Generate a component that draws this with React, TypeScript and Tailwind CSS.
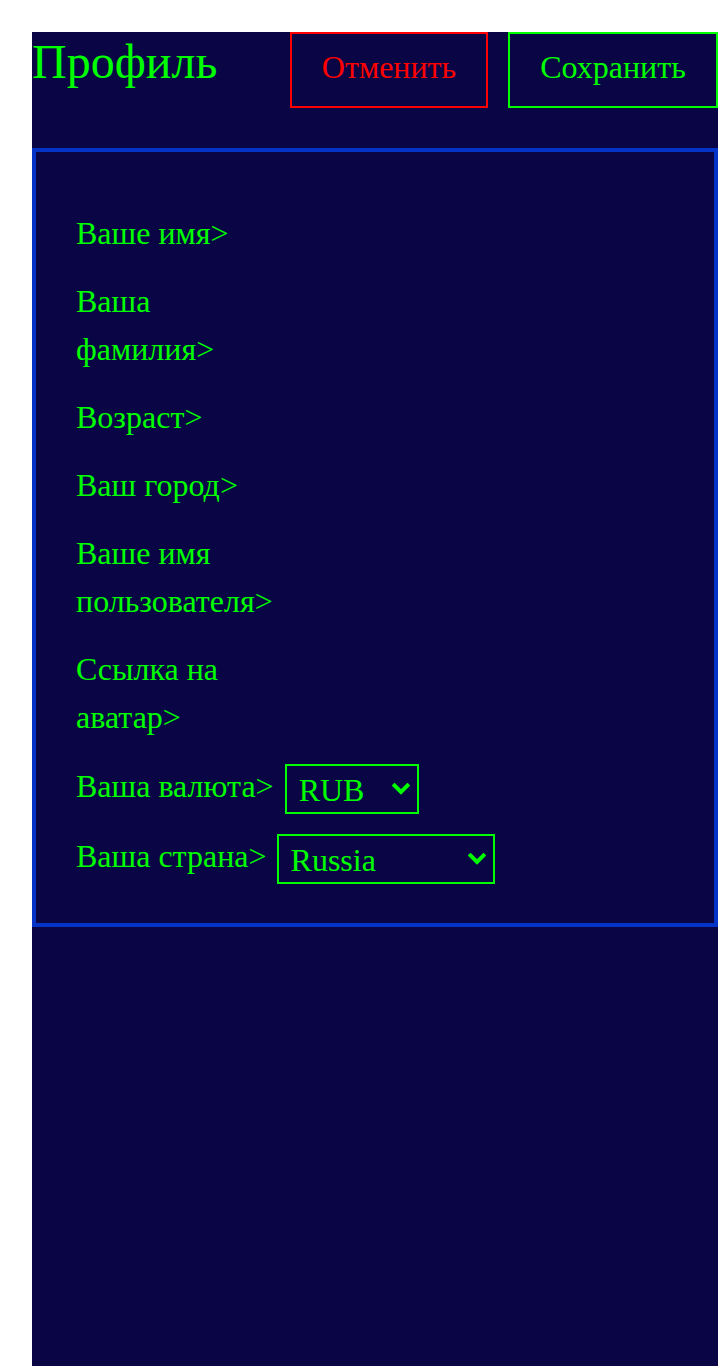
import React from 'react';

const fields = [
    "Ваше имя>",
    "Ваша фамилия>",
    "Возраст>",
    "Ваш город>",
    "Ваше имя пользователя>",
    "Ссылка на аватар>",
];

const Chevron: React.FC = () => (
    <svg
        className="pointer-events-none absolute right-[9px] top-1/2 -translate-y-1/2"
        width="18"
        height="12"
        viewBox="0 0 18 12"
        fill="none"
    >
        <polyline points="2.5,2.5 9,9 15.5,2.5" stroke="#00ff00" strokeWidth="4" strokeLinecap="square" />
    </svg>
);

const Select: React.FC<{ options: string[]; width: string }> = ({ options, width }) => (
    <div className={`relative ${width}`}>
        <select className="h-[50px] w-full appearance-none border-2 border-[#00ff00] bg-transparent pb-[8px] pl-[12px] text-[32px] leading-normal text-[#00ff00] outline-none">
            {options.map((o) => (
                <option key={o} className="bg-[#0a0645]">{o}</option>
            ))}
        </select>
        <Chevron />
    </div>
);

export default function App() {
    return (
        <div className="min-h-screen bg-white pl-8 pt-8" style={{ fontFamily: '"Liberation Serif", "Times New Roman", serif' }}>
            <div className="flex min-h-[1334px] flex-col bg-[#0a0645]">

                {/* Header */}
                <div className="flex items-start justify-between">
                    <h1 className="text-[48px] leading-[60px] text-[#00ff00]">Профиль</h1>
                    <div className="flex gap-5">
                        <button className="flex h-[76px] w-[198px] items-center justify-center border-2 border-[#ff0000] pb-[7px] text-[32px] text-[#ff0000]">
                            Отменить
                        </button>
                        <button className="flex h-[76px] w-[210px] items-center justify-center border-2 border-[#00ff00] pb-[7px] text-[32px] text-[#00ff00]">
                            Сохранить
                        </button>
                    </div>
                </div>

                {/* Form */}
                <div className="mt-10 flex flex-col gap-5 border-4 border-[#0433c8] px-10 pb-[39px] pt-[57px] text-[32px] leading-[48px] text-[#00ff00]">
                    {fields.map((f) => (
                        <div key={f} className="max-w-[210px]">{f}</div>
                    ))}
                    <div className="mt-[3px] flex items-start gap-[11px]">
                        <span className="-mt-[2px]">Ваша валюта&gt;</span>
                        <Select options={["RUB", "USD", "EUR"]} width="w-[134px]" />
                    </div>
                    <div className="flex items-start gap-[10px]">
                        <span className="-mt-[2px]">Ваша страна&gt;</span>
                        <Select options={["Russia", "Belarus", "Kazakhstan"]} width="w-[218px]" />
                    </div>
                </div>
            </div>
        </div>
    );
}
